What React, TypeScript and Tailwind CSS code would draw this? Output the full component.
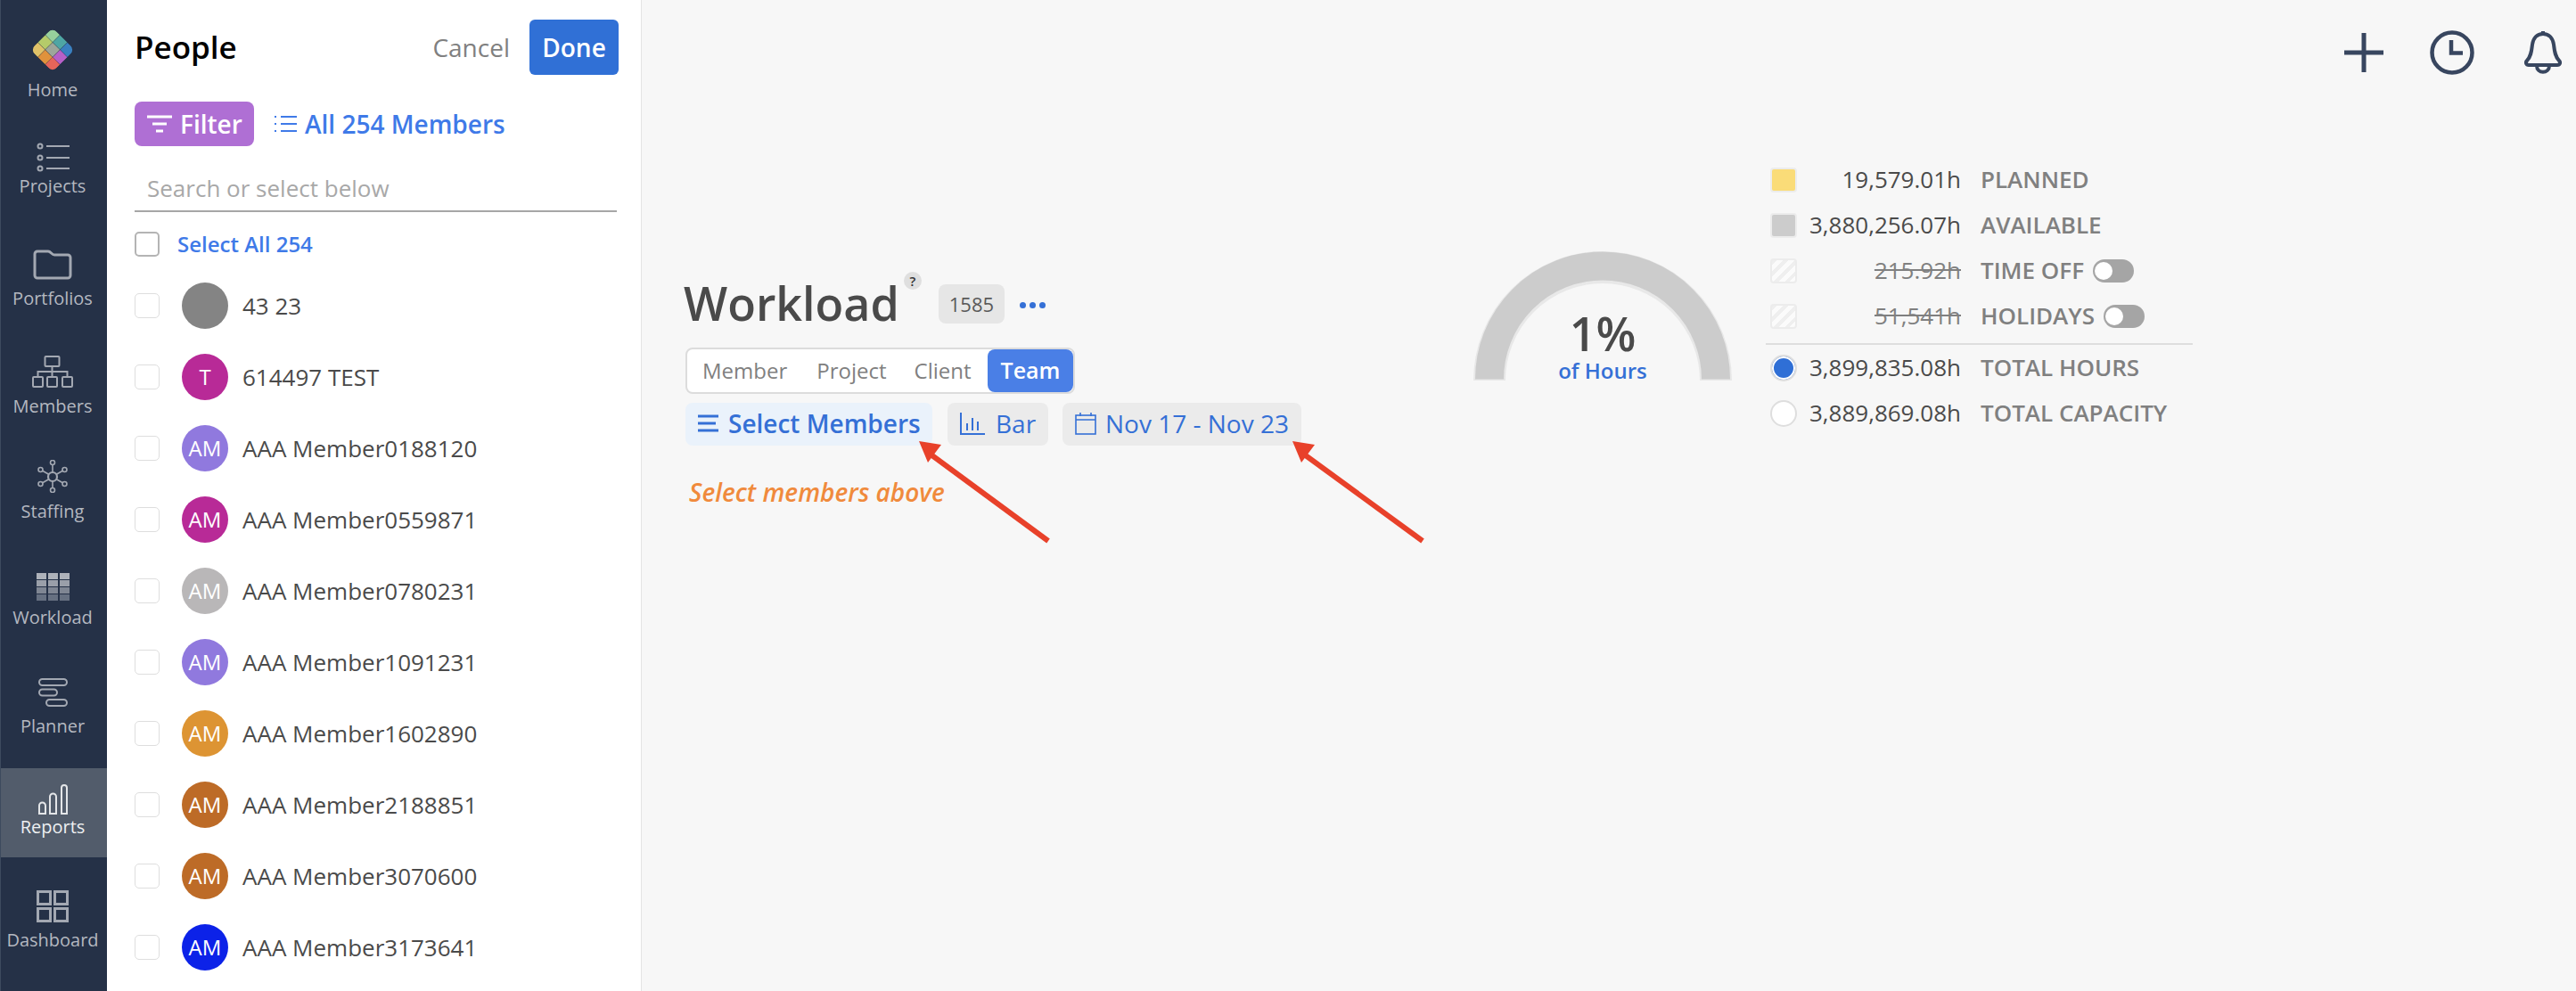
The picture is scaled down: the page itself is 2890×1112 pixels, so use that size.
import type { ReactNode } from 'react';

const font = { fontFamily: '"Open Sans", sans-serif' };

function Logo() {
  const colors = ['#97d09c', '#4ea6a4', '#3a80c0', '#b5cb6a', '#9da69a', '#b660c8', '#e0c268', '#e0923c', '#e6655a'];
  return (
    <svg width="50" height="50" viewBox="0 0 50 50">
      <defs>
        <clipPath id="logo-clip">
          <rect x="7.3" y="7.3" width="35.4" height="35.4" rx="7" />
        </clipPath>
      </defs>
      <g transform="rotate(45 25 25)" clipPath="url(#logo-clip)">
        {colors.map((c, i) => (
          <rect key={i} x={7.3 + (i % 3) * 11.8} y={7.3 + Math.floor(i / 3) * 11.8} width="11.5" height="11.5" fill={c} />
        ))}
      </g>
    </svg>
  );
}

const navStroke = '#a3a8b2';

const ProjectsIcon = () => (
  <svg width="38" height="33" viewBox="0 0 38 33" fill="none" stroke={navStroke} strokeWidth="2">
    <circle cx="5" cy="4" r="2.5" />
    <circle cx="5" cy="17" r="2.5" />
    <circle cx="5" cy="29" r="2.5" />
    <path d="M12 4h26M12 17h26M12 29h26" />
  </svg>
);

const FolderIcon = () => (
  <svg width="44" height="34" viewBox="0 0 44 34" fill="none" stroke={navStroke} strokeWidth="3">
    <path d="M2 5a3 3 0 0 1 3-3h12c3 0 4 4 7 4h15a3 3 0 0 1 3 3v20a3 3 0 0 1-3 3H5a3 3 0 0 1-3-3z" />
  </svg>
);

const MembersIcon = () => (
  <svg width="46" height="36" viewBox="0 0 46 36" fill="none" stroke={navStroke} strokeWidth="2">
    <rect x="14.5" y="1" width="16" height="11" rx="1" />
    <rect x="1" y="24" width="11" height="11" rx="1" />
    <rect x="17" y="24" width="11" height="11" rx="1" />
    <rect x="34" y="24" width="11" height="11" rx="1" />
    <path d="M22.5 12v12M6.5 24v-6h33v6" />
  </svg>
);

const StaffingIcon = () => (
  <svg width="34" height="37" viewBox="0 0 34 37" fill="none" stroke={navStroke} strokeWidth="1.6">
    <circle cx="17" cy="19" r="5" strokeWidth="2.2" />
    <circle cx="17" cy="3" r="2.5" />
    <circle cx="17" cy="34" r="2.5" />
    <circle cx="3.5" cy="11" r="2.5" />
    <circle cx="30.5" cy="11" r="2.5" />
    <circle cx="3.5" cy="27" r="2.5" />
    <circle cx="30.5" cy="27" r="2.5" />
    <path d="M17 5.5V14M17 24v7.5M5.7 12.3l7 4M28.3 12.3l-7 4M5.7 25.7l7-4M28.3 25.7l-7-4" />
  </svg>
);

const WorkloadIcon = () => {
  const rows = ['#aeb2ba', '#9a9fa9', '#7f8693', '#667081'];
  return (
    <svg width="37" height="31" viewBox="0 0 37 31">
      {rows.map((c, r) =>
        [0, 13, 26].map((x) => <rect key={`${r}-${x}`} x={x} y={r * 8} width="11" height="7" fill={c} />),
      )}
    </svg>
  );
};

const PlannerIcon = () => (
  <svg width="33" height="32" viewBox="0 0 33 32" fill="none" stroke={navStroke} strokeWidth="2">
    <rect x="1" y="1" width="31" height="7" rx="3.5" />
    <rect x="1" y="12.5" width="20" height="7" rx="3.5" />
    <rect x="9" y="24" width="23" height="7" rx="3.5" />
  </svg>
);

const ReportsIcon = () => (
  <svg width="35" height="34" viewBox="0 0 35 34" fill="none" stroke="#e3e5e8" strokeWidth="2">
    <path d="M2 33V24a3.5 3.5 0 0 1 7 0v9zM14 33V14a3.5 3.5 0 0 1 7 0v19zM27 33V4a3 3 0 0 1 6 0v29z" />
  </svg>
);

const DashboardIcon = () => (
  <svg width="36" height="36" viewBox="0 0 36 36" fill="none" stroke={navStroke} strokeWidth="3">
    <rect x="1.5" y="1.5" width="14" height="14" />
    <rect x="20.5" y="1.5" width="14" height="14" />
    <rect x="1.5" y="20.5" width="14" height="14" />
    <rect x="20.5" y="20.5" width="14" height="14" />
  </svg>
);

const navItems: { label: string; box: string; gap: string; icon: ReactNode }[] = [
  { label: 'Home', box: 'h-[130px] pt-[31px]', gap: 'mt-[7px]', icon: <Logo /> },
  { label: 'Projects', box: 'h-[128px] pt-[30px]', gap: 'mt-[3px]', icon: <ProjectsIcon /> },
  { label: 'Portfolios', box: 'h-[122px] pt-[22px]', gap: 'mt-[8px]', icon: <FolderIcon /> },
  { label: 'Members', box: 'h-[117px] pt-[19px]', gap: 'mt-[8px]', icon: <MembersIcon /> },
  { label: 'Staffing', box: 'h-[124px] pt-[19px]', gap: 'mt-[8px]', icon: <StaffingIcon /> },
  { label: 'Workload', box: 'h-[116px] pt-[22px]', gap: 'mt-[6px]', icon: <WorkloadIcon /> },
  { label: 'Planner', box: 'h-[125px] pt-[24px]', gap: 'mt-[9px]', icon: <PlannerIcon /> },
  { label: 'Reports', box: 'h-[100px] pt-[18px] bg-[#525c6b] text-[#eef0f2]', gap: 'mt-[1px]', icon: <ReportsIcon /> },
  { label: 'Dashboard', box: 'h-[150px] pt-[37px]', gap: 'mt-[7px]', icon: <DashboardIcon /> },
];

const members = [
  { name: '43 23', initials: '', color: 'bg-[#848484]' },
  { name: '614497 TEST', initials: 'T', color: 'bg-[#b82a97]' },
  { name: 'AAA Member0188120', initials: 'AM', color: 'bg-[#9079de]' },
  { name: 'AAA Member0559871', initials: 'AM', color: 'bg-[#b82a97]' },
  { name: 'AAA Member0780231', initials: 'AM', color: 'bg-[#b9b7b8]' },
  { name: 'AAA Member1091231', initials: 'AM', color: 'bg-[#9079de]' },
  { name: 'AAA Member1602890', initials: 'AM', color: 'bg-[#dd9433]' },
  { name: 'AAA Member2188851', initials: 'AM', color: 'bg-[#bd6b27]' },
  { name: 'AAA Member3070600', initials: 'AM', color: 'bg-[#bd6b27]' },
  { name: 'AAA Member3173641', initials: 'AM', color: 'bg-[#0c22e8]' },
];

function Sidebar() {
  return (
    <nav className="w-[120px] shrink-0 bg-[#253147] border-l border-[#3d4a5e] text-[#b4b8c0]">
      {navItems.map((item) => (
        <div key={item.label} className={`flex flex-col items-center pr-[3px] ${item.box}`}>
          <div className="flex justify-center">{item.icon}</div>
          <span className={`text-[20px] leading-[26px] ${item.gap}`}>{item.label}</span>
        </div>
      ))}
    </nav>
  );
}

function PeoplePanel() {
  return (
    <aside className="w-[600px] shrink-0 bg-white border-r border-[#e4e4e4] pl-[31px] pr-[25px] pt-[22px]">
      <div className="flex items-center h-[62px]">
        <h2 className="text-[35px] font-semibold text-black">People</h2>
        <span className="ml-auto mr-[22px] text-[28px] text-[#808080]">Cancel</span>
        <button className="w-[100px] h-[62px] rounded-[6px] bg-[#3070d6] text-white text-[28px] font-semibold">Done</button>
      </div>
      <div className="flex items-center mt-[30px] h-[50px]">
        <button className="flex items-center w-[134px] h-[50px] rounded-[8px] bg-[#af6fd4] text-white text-[28px] font-semibold pl-[14px]">
          <svg width="28" height="20" viewBox="0 0 28 20" stroke="white" strokeWidth="3" className="mr-[9px]">
            <path d="M0 2h28M6 10h16M10 18h8" />
          </svg>
          Filter
        </button>
        <span className="flex items-center ml-[23px] text-[28px] font-semibold text-[#3f7ae8]">
          <svg width="25" height="20" viewBox="0 0 25 20" stroke="#3f7ae8" strokeWidth="2" className="mr-[9px]">
            <path d="M0 2h2M7 2h18M0 10h2M7 10h18M0 18h2M7 18h18" />
          </svg>
          All 254 Members
        </span>
      </div>
      <div className="h-[73px] flex items-center pl-[14px] pt-[22px] mt-px mr-[2px] border-b-2 border-[#a6a6a6] text-[26px] text-[#a8a8a8]">
        Search or select below
      </div>
      <div className="flex items-center mt-[22px] h-[28px]">
        <span className="w-[28px] h-[28px] rounded-[5px] border-2 border-[#b4b4b4] bg-white" />
        <span className="ml-[20px] text-[24px] font-semibold text-[#3f7ae8]">Select All 254</span>
      </div>
      <ul className="mt-[15px]">
        {members.map((m) => (
          <li key={m.name} className="flex items-center h-[80px]">
            <span className="w-[28px] h-[28px] rounded-[5px] border border-[#dedede] bg-white" />
            <span className={`ml-[25px] w-[52px] h-[52px] rounded-full flex items-center justify-center text-white text-[24px] font-medium ${m.color}`}>
              {m.initials}
            </span>
            <span className="ml-[16px] text-[26px] text-[#4a4a4a]">{m.name}</span>
          </li>
        ))}
      </ul>
    </aside>
  );
}

function WorkloadHeader() {
  return (
    <div className="w-[933px] shrink-0 pl-[47px] pt-[304px]">
      <div className="flex items-start h-[86px]">
        <h1 className="text-[52px] leading-[72px] font-semibold text-[#4a4a4a]">Workload</h1>
        <span className="ml-[5px] mt-px w-[20px] h-[20px] rounded-full bg-[#dfdfdf] flex items-center justify-center text-[15px] font-semibold text-[#333]">?</span>
        <span className="ml-[19px] mt-[15px] w-[74px] h-[44px] rounded-[8px] bg-[#e6e6e6] flex items-center justify-center text-[22px] text-[#5a5a5a]">1585</span>
        <span className="ml-[17px] mt-[35px] flex gap-[4px]">
          <i className="w-[7px] h-[7px] rounded-full bg-[#3570d6]" />
          <i className="w-[7px] h-[7px] rounded-full bg-[#3570d6]" />
          <i className="w-[7px] h-[7px] rounded-full bg-[#3570d6]" />
        </span>
      </div>
      <div className="ml-[2px] w-[437px] h-[52px] rounded-[8px] border-2 border-[#dcdcdc] bg-white flex items-center text-[24px] text-[#808080]">
        <span className="ml-[17px]">Member</span>
        <span className="ml-[33px]">Project</span>
        <span className="ml-[31px]">Client</span>
        <span className="ml-auto w-[96px] h-[48px] rounded-[8px] bg-[#4a7fe6] text-white text-[25px] font-semibold flex items-center justify-center">Team</span>
      </div>
      <div className="flex ml-[2px] mt-[10px] text-[28px] leading-[44px] text-[#3570d6]">
        <span className="flex items-center w-[277px] h-[48px] rounded-[8px] bg-[#eaf2fb] pl-[14px] pb-[2px] font-semibold">
          <svg width="23" height="20" viewBox="0 0 23 20" stroke="#3570d6" strokeWidth="3" className="mr-[11px]">
            <path d="M0 2h23M0 10h20M0 18h23" />
          </svg>
          Select Members
        </span>
        <span className="flex items-center w-[113px] h-[48px] rounded-[8px] bg-[#ebebeb] pl-[14px] pb-[2px] ml-[17px]">
          <svg width="28" height="25" viewBox="0 0 28 25" stroke="#3570d6" fill="none" strokeWidth="2" className="mr-[12px]">
            <path d="M1 0v24h27M8 12v8M14 6v14M20 10v10" />
          </svg>
          Bar
        </span>
        <span className="flex items-center w-[268px] h-[48px] rounded-[8px] bg-[#ebebeb] pl-[14px] pb-[2px] ml-[16px]">
          <svg width="24" height="25" viewBox="0 0 24 25" stroke="#3570d6" fill="none" strokeWidth="1.6" className="mr-[10px]">
            <rect x="1" y="3" width="22" height="21" />
            <path d="M1 8h22M6 0v4M18 0v4" />
          </svg>
          Nov 17 - Nov 23
        </span>
      </div>
      <p className="ml-[6px] mt-[31px] text-[28px] italic font-semibold text-[#f08a3c]">Select members above</p>
    </div>
  );
}

function Gauge() {
  return (
    <div className="w-[333px] shrink-0 pt-[282px]">
      <div className="w-[290px] flex flex-col items-center">
        <svg width="290" height="145" viewBox="0 0 290 145" className="block">
          <path d="M18 145A127 127 0 0 1 272 145" fill="none" stroke="#e8e8e8" strokeWidth="36" />
          <path d="M18 143.5A127 127 0 0 1 272 143.5" fill="none" stroke="#cccccc" strokeWidth="32" />
        </svg>
        <div className="-mt-[81px] flex flex-col items-center">
          <span className="text-[52px] leading-[56px] font-semibold text-[#4a4a4a]">1%</span>
          <span className="text-[24px] leading-[28px] font-semibold text-[#3570d6]">of Hours</span>
        </div>
      </div>
    </div>
  );
}

const Toggle = ({ offset }: { offset: string }) => (
  <span className={`relative w-[46px] h-[26px] rounded-full bg-[#a5a5a5] ${offset}`}>
    <span className="absolute left-[2px] top-[3px] w-[20px] h-[20px] rounded-full bg-white" />
  </span>
);

const hatch = 'bg-[repeating-linear-gradient(135deg,#efefef_0px,#efefef_4px,#fbfbfb_4px,#fbfbfb_9px)]';

function LegendRow(props: { mark: ReactNode; value: string; label: string; struck?: boolean; toggle?: ReactNode }) {
  return (
    <div className="flex items-center h-[51px]">
      <div className="w-[30px] flex justify-center">{props.mark}</div>
      <span className={`w-[184px] text-right text-[26px] ${props.struck ? 'line-through text-[#808080]' : 'text-[#4a4a4a]'}`}>{props.value}</span>
      <span className="ml-[22px] text-[26px] text-[#808080] font-semibold">{props.label}</span>
      {props.toggle}
    </div>
  );
}

const swatch = 'w-[30px] h-[28px] rounded-[4px] border-2 border-[#ececec]';

function Legend() {
  return (
    <div className="w-[479px] shrink-0 pt-[176px] -ml-[5px]">
      <div className="pl-[5px]">
        <LegendRow mark={<span className={`${swatch} bg-[#fadc78]`} />} value="19,579.01h" label="PLANNED" />
        <LegendRow mark={<span className={`${swatch} bg-[#cccccc]`} />} value="3,880,256.07h" label="AVAILABLE" />
        <LegendRow mark={<span className={`${swatch} ${hatch}`} />} value="215.92h" label="TIME OFF" struck toggle={<Toggle offset="ml-[10px]" />} />
        <LegendRow mark={<span className={`${swatch} ${hatch}`} />} value="51,541h" label="HOLIDAYS" struck toggle={<Toggle offset="ml-[10px]" />} />
      </div>
      <div className="mt-[5px] border-t-2 border-[#dedede] pl-[5px]">
        <LegendRow mark={<span className="w-[30px] h-[30px] rounded-full border-2 border-[#dedede] bg-[#2f6fd6] shadow-[inset_0_0_0_2px_white]" />} value="3,899,835.08h" label="TOTAL HOURS" />
        <LegendRow mark={<span className="w-[30px] h-[30px] rounded-full border-2 border-[#dedede] bg-white" />} value="3,889,869.08h" label="TOTAL CAPACITY" />
      </div>
    </div>
  );
}

function TopIcons() {
  return (
    <div className="ml-auto flex items-center pt-[34px] pr-[16px] h-[50px] box-content">
      <svg width="44" height="44" viewBox="0 0 44 44" stroke="#38465f" strokeWidth="5">
        <path d="M22 0v44M0 22h44" />
      </svg>
      <svg width="50" height="50" viewBox="0 0 50 50" fill="none" stroke="#38465f" strokeWidth="4.5" className="ml-[52px]">
        <circle cx="25" cy="25" r="22.5" />
        <path d="M24 11v14.5h13" />
      </svg>
      <svg width="42" height="48" viewBox="0 0 42 48" fill="none" stroke="#38465f" strokeWidth="4" className="ml-[56px]">
        <path d="M21 3c-7 0-11 5-12 12-1 9-2 14-6 18-2 2-1 5 2 5h32c3 0 4-3 2-5-4-4-5-9-6-18-1-7-5-12-12-12z" />
        <path d="M14 39c0 9 14 9 14 0" />
        <path d="M21 0v3" />
      </svg>
    </div>
  );
}

export default function App() {
  return (
    <div className="relative flex w-[2890px] h-[1112px] overflow-hidden bg-[#f7f7f7]" style={font}>
      <Sidebar />
      <PeoplePanel />
      <main className="flex flex-1 items-start">
        <WorkloadHeader />
        <Gauge />
        <Legend />
        <TopIcons />
      </main>
      {/* red annotation arrows drawn on top of the screenshot */}
      <svg className="absolute left-0 top-0 pointer-events-none" width="2890" height="1112" fill="#e8412a" stroke="#e8412a">
        <path d="M1176 607L1043 509" strokeWidth="6" />
        <path d="M1031 495L1056 499L1041 519z" strokeWidth="0" />
        <path d="M1596 607L1462 509" strokeWidth="6" />
        <path d="M1450 495L1475 499L1460 519z" strokeWidth="0" />
      </svg>
    </div>
  );
}
